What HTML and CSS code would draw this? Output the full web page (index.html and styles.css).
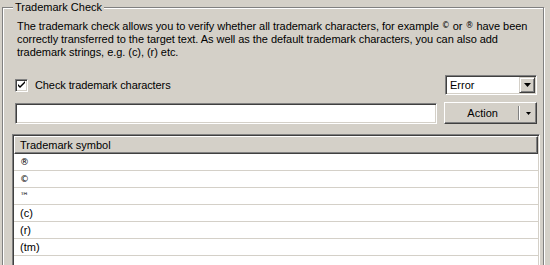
FILE: index.html
```html
<!DOCTYPE html>
<html>
<head>
<meta charset="utf-8">
<link rel="stylesheet" href="styles.css">
</head>
<body>
<fieldset class="group">
  <legend class="group-title">Trademark Check</legend>
  <div class="group-body">
    <p class="desc">The trademark check allows you to verify whether all trademark characters, for example <span class="sym">©&#xFE0E;</span> or <span class="sym">®&#xFE0E;</span> have been<br>correctly transferred to the target text. As well as the default trademark characters, you can also add<br>trademark strings, e.g. (c), (r) etc.</p>
    <div class="row-check">
      <label class="check">
        <span class="check-box"><svg width="9" height="9" viewBox="0 0 9 9"><path d="M1 3 L1 5 L3 7 L8 2 L8 0 L3 5 Z" fill="#000"/></svg></span>
        <span class="check-label">Check trademark characters</span>
      </label>
      <div class="combo">
        <span class="combo-text">Error</span>
        <span class="combo-btn"><svg width="7" height="4" viewBox="0 0 7 4"><path d="M0 0 H7 L3.5 4 Z" fill="#000"/></svg></span>
      </div>
    </div>
    <div class="row-input">
      <div class="textbox"></div>
      <div class="split-btn">
        <span class="split-main">Action</span>
        <span class="split-sep"></span>
        <span class="split-arrow"><svg width="5" height="3" viewBox="0 0 5 3"><path d="M0 0 H5 L2.5 3 Z" fill="#000"/></svg></span>
      </div>
    </div>
    <div class="list">
      <div class="list-header">Trademark symbol</div>
      <div class="list-row"><span class="sym sym-row">®&#xFE0E;</span></div>
      <div class="list-row"><span class="sym sym-row">©&#xFE0E;</span></div>
      <div class="list-row"><span class="sym sym-row">™&#xFE0E;</span></div>
      <div class="list-row">(c)</div>
      <div class="list-row">(r)</div>
      <div class="list-row">(tm)</div>
    </div>
  </div>
</fieldset>
</body>
</html>
```
FILE: styles.css
```css
* { box-sizing: border-box; }

body {
  margin: 0;
  background: #d4d0c8;
  font-family: "Liberation Sans", Arial, sans-serif;
  font-size: 11px;
  line-height: 13px;
  color: #000;
  overflow: hidden;
}

.group {
  margin: 1px 0 0 2px;
  padding: 0;
  width: 542px;
  height: 320px;
  min-width: 0;
  border: 1px solid #808080;
  box-shadow: inset 1px 1px 0 #fff, 1px 1px 0 #fff;
}

.group-title {
  margin-left: 10px;
  padding: 0 2px;
  background: #d4d0c8;
  line-height: 13px;
}

.group-body {
  padding: 5px 6px 0 12px;
}

.desc {
  margin: 0;
  padding-left: 2px;
  white-space: nowrap;
  letter-spacing: -0.05px;
}

.sym {
  font-family: "DejaVu Sans", sans-serif;
  font-size: 8px;
  vertical-align: 2px;
  color: #000;
}

.sym-row {
  font-size: 9px;
  vertical-align: 1px;
}

.row-check {
  display: flex;
  justify-content: space-between;
  align-items: center;
  margin-top: 16px;
  height: 20px;
}

.check {
  display: flex;
  align-items: center;
  gap: 7px;
}

.check-label {
  letter-spacing: -0.1px;
}

.check-box {
  width: 13px;
  height: 13px;
  background: #fff;
  border: 1px solid;
  border-color: #808080 #fff #fff #808080;
  box-shadow: inset 1px 1px 0 #404040, inset -1px -1px 0 #d4d0c8;
  padding: 1px;
  display: flex;
}

.check-box svg { display: block; }

.combo {
  width: 92px;
  height: 20px;
  background: #fff;
  border: 1px solid;
  border-color: #808080 #fff #fff #808080;
  box-shadow: inset 1px 1px 0 #404040, inset -1px -1px 0 #d4d0c8;
  padding: 1px;
  display: flex;
  align-items: center;
}

.combo-text {
  flex: 1;
  padding-left: 3px;
}

.combo-btn {
  width: 16px;
  height: 16px;
  background: #d4d0c8;
  border: 1px solid;
  border-color: #d4d0c8 #404040 #404040 #d4d0c8;
  box-shadow: inset 1px 1px 0 #fff, inset -1px -1px 0 #808080;
  display: flex;
  align-items: center;
  justify-content: center;
}

.combo-btn svg { display: block; }

.row-input {
  display: flex;
  align-items: center;
  gap: 7px;
  margin-top: 7px;
  height: 22px;
}

.textbox {
  width: 423px;
  height: 21px;
  background: #fff;
  border: 1px solid;
  border-color: #808080 #fff #fff #808080;
  box-shadow: inset 1px 1px 0 #404040, inset -1px -1px 0 #d4d0c8;
}

.split-btn {
  width: 93px;
  height: 22px;
  border: 1px solid;
  border-color: #fff #404040 #404040 #fff;
  box-shadow: inset -1px -1px 0 #808080;
  display: flex;
  align-items: center;
}

.split-main {
  flex: 1;
  text-align: center;
  padding-left: 2px;
}

.split-sep {
  width: 2px;
  height: 14px;
  border-left: 1px solid #808080;
  border-right: 1px solid #fff;
}

.split-arrow {
  width: 16px;
  display: flex;
  justify-content: center;
}

.split-arrow svg { display: block; }

.list {
  margin: 10px 0 0 -3px;
  width: 528px;
  height: 200px;
  background: #fff;
  border: 1px solid;
  border-color: #808080 #fff #fff #808080;
  box-shadow: inset 1px 1px 0 #404040, inset -1px -1px 0 #d4d0c8;
  padding: 1px;
}

.list-header {
  height: 18px;
  line-height: 16px;
  padding-left: 5px;
  background: #d4d0c8;
  border: 1px solid;
  border-color: #fff #404040 #404040 #fff;
  box-shadow: inset -1px -1px 0 #808080;
}

.list-row {
  height: 17px;
  line-height: 16px;
  padding-left: 6px;
  border-bottom: 1px solid #d4d0c8;
}
```
